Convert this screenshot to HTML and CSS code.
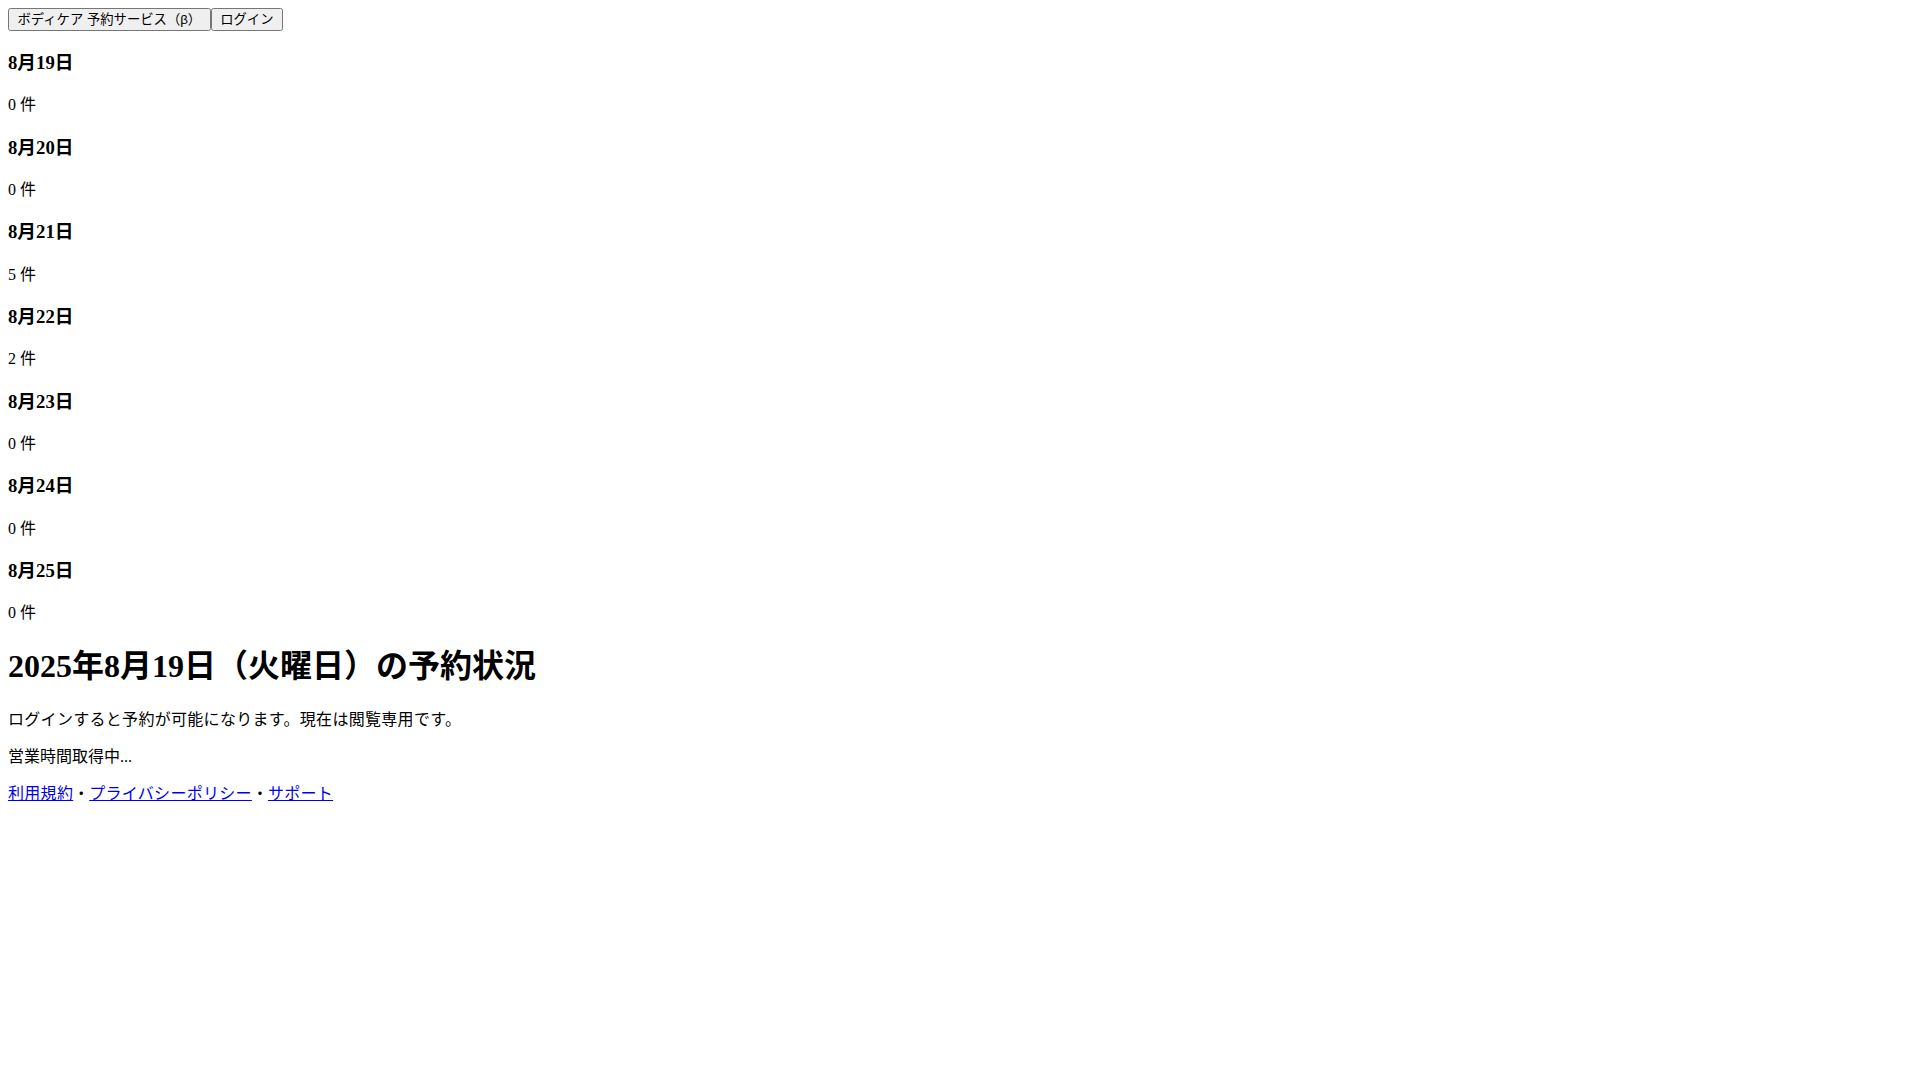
FILE: index.html
```html
<!DOCTYPE html>
<html lang="ja">
<head>
<meta charset="utf-8">
<title>ボディケア 予約サービス（β）</title>
<link rel="stylesheet" href="styles.css">
</head>
<body class="page">
<header class="top">
<button class="btn">ボディケア 予約サービス（β）</button><button class="btn">ログイン</button>
</header>
<section class="days">
<h3 class="day-title">8月19日</h3>
<p class="day-count">0 件</p>
<h3 class="day-title">8月20日</h3>
<p class="day-count">0 件</p>
<h3 class="day-title">8月21日</h3>
<p class="day-count">5 件</p>
<h3 class="day-title">8月22日</h3>
<p class="day-count">2 件</p>
<h3 class="day-title">8月23日</h3>
<p class="day-count">0 件</p>
<h3 class="day-title">8月24日</h3>
<p class="day-count">0 件</p>
<h3 class="day-title">8月25日</h3>
<p class="day-count">0 件</p>
</section>
<main class="main">
<h1 class="main-title">2025年8月19日（火曜日）の予約状況</h1>
<p class="note note-login">ログインすると予約が可能になります。現在は閲覧専用です。</p>
<p class="note">営業時間取得中...</p>
</main>
<footer class="foot">
<p class="links"><a href="#">利用規約</a>・<a href="#">プライバシーポリシー</a>・<a href="#">サポート</a></p>
</footer>
</body>
</html>
```

FILE: styles.css
```css
.page {
  margin: 8px;
  font-family: "Liberation Serif", "Noto Sans CJK JP", serif;
  font-size: 16px;
  line-height: 1.36;
  color: #000;
  background: #fff;
}
.top {
  line-height: 1.36;
}
.btn {
  font-family: "Liberation Sans", "Noto Sans CJK JP", sans-serif;
  font-size: 13.333px;
  line-height: 17.4px;
  padding: 1px 7.5px;
  vertical-align: top;
}
.main-title {
  line-height: 1.3;
  margin-top: 22px;
}
.note,
.links {
  line-height: 1.33;
}
.note-login {
  letter-spacing: 0.3px;
}
.links a {
  letter-spacing: 0.3px;
}
```
